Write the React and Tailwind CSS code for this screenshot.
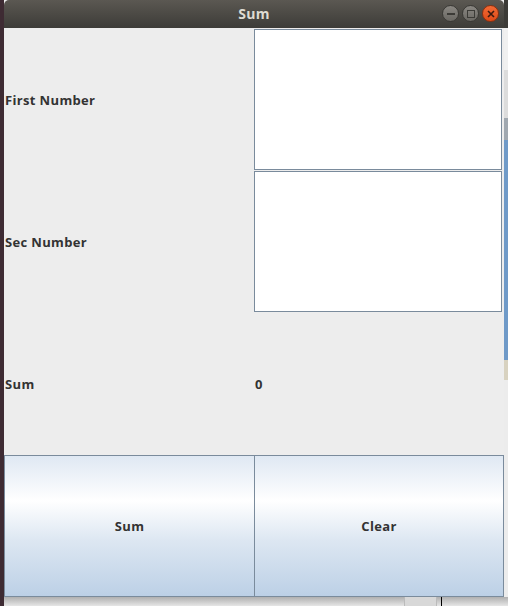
export default function App() {
  const font = { fontFamily: '"Open Sans", "DejaVu Sans", sans-serif' };
  return (
    <div className="w-[508px] h-[606px] overflow-hidden flex flex-col bg-[#ececec]" style={font}>
      <div className="flex h-[597px]">
        <div className="w-[4px] bg-[#3e2b33]" />
        <div className="w-[500px] flex flex-col bg-[#ededed]">
          <div className="h-[28px] rounded-t-[5px] bg-gradient-to-b from-[#5b5852] to-[#3d3c38] relative flex items-center justify-center">
            <span className="text-[14px] font-bold text-[#dfdbd2] leading-none tracking-[0.3px]">Sum</span>
            <div className="absolute right-[5px] top-[5px] flex gap-[3px]">
              <div className="w-[17px] h-[17px] rounded-full bg-gradient-to-b from-[#8a8782] to-[#6a6863] border border-[#3a3935] flex items-center justify-center">
                <div className="w-[8px] h-[2px] bg-[#3c3b37]" />
              </div>
              <div className="w-[17px] h-[17px] rounded-full bg-gradient-to-b from-[#8a8782] to-[#6a6863] border border-[#3a3935] flex items-center justify-center">
                <div className="w-[8px] h-[8px] border-[1.5px] border-[#3c3b37]" />
              </div>
              <div className="w-[17px] h-[17px] rounded-full bg-gradient-to-b from-[#f26a35] to-[#df4a16] border border-[#8e2f0e] flex items-center justify-center">
                <svg width="8" height="8" viewBox="0 0 8 8">
                  <path d="M1 1L7 7M7 1L1 7" stroke="#3c1a10" strokeWidth="1.6" />
                </svg>
              </div>
            </div>
          </div>
          <div className="grid grid-cols-[250px_250px] grid-rows-[142px_142px_143px] text-[13px] font-bold text-[#333333] tracking-[0.35px]">
            <div className="flex items-center pl-[1px] pt-[3px]">First Number</div>
            <div className="pr-[2px] pt-[1px]">
              <div className="h-[141px] bg-white border border-[#7a8b9c]" />
            </div>
            <div className="flex items-center pl-[1px] pt-[3px]">Sec Number</div>
            <div className="pr-[2px] pt-[1px]">
              <div className="h-[141px] bg-white border border-[#7a8b9c]" />
            </div>
            <div className="flex items-center pl-[1px] pt-[2px]">Sum</div>
            <div className="flex items-center pl-[1px] pt-[2px]">0</div>
          </div>
          <div className="flex h-[142px] text-[13px] font-bold text-[#333333] tracking-[0.35px]">
            <div className="w-[251px] border border-[#7a8b9c] flex items-center justify-center pt-[2px] bg-[linear-gradient(to_bottom,#dfe8f3_0%,#ffffff_32%,#dde7f2_60%,#bcd0e6_100%)]">Sum</div>
            <div className="flex-1 border border-l-0 border-[#7a8b9c] flex items-center justify-center pt-[2px] bg-[linear-gradient(to_bottom,#dfe8f3_0%,#ffffff_32%,#dde7f2_60%,#bcd0e6_100%)]">Clear</div>
          </div>
        </div>
        <div className="w-[4px] flex flex-col">
          <div className="h-[28px] bg-[#3c3b37]" />
          <div className="h-[42px] bg-[#f0f0f0]" />
          <div className="h-[48px] bg-[#dcdcdc]" />
          <div className="h-[22px] bg-[#a0a8b0]" />
          <div className="h-[220px] bg-[#6f9ac8]" />
          <div className="h-[20px] bg-[#d8d2c0]" />
          <div className="flex-1 bg-[#ececec]" />
        </div>
      </div>
      <div className="flex flex-1">
        <div className="w-[4px] bg-[#3e2b33]" />
        <div className="flex-1 bg-gradient-to-b from-[#b0b0b0] to-[#e6e6e6] relative">
          <div className="absolute left-[400px] top-0 w-[33px] h-[9px] bg-[#d8d8d8] border-x border-[#bbbbbb]" />
          <div className="absolute left-[437px] top-0 w-[1px] h-[9px] bg-black" />
        </div>
      </div>
    </div>
  );
}
